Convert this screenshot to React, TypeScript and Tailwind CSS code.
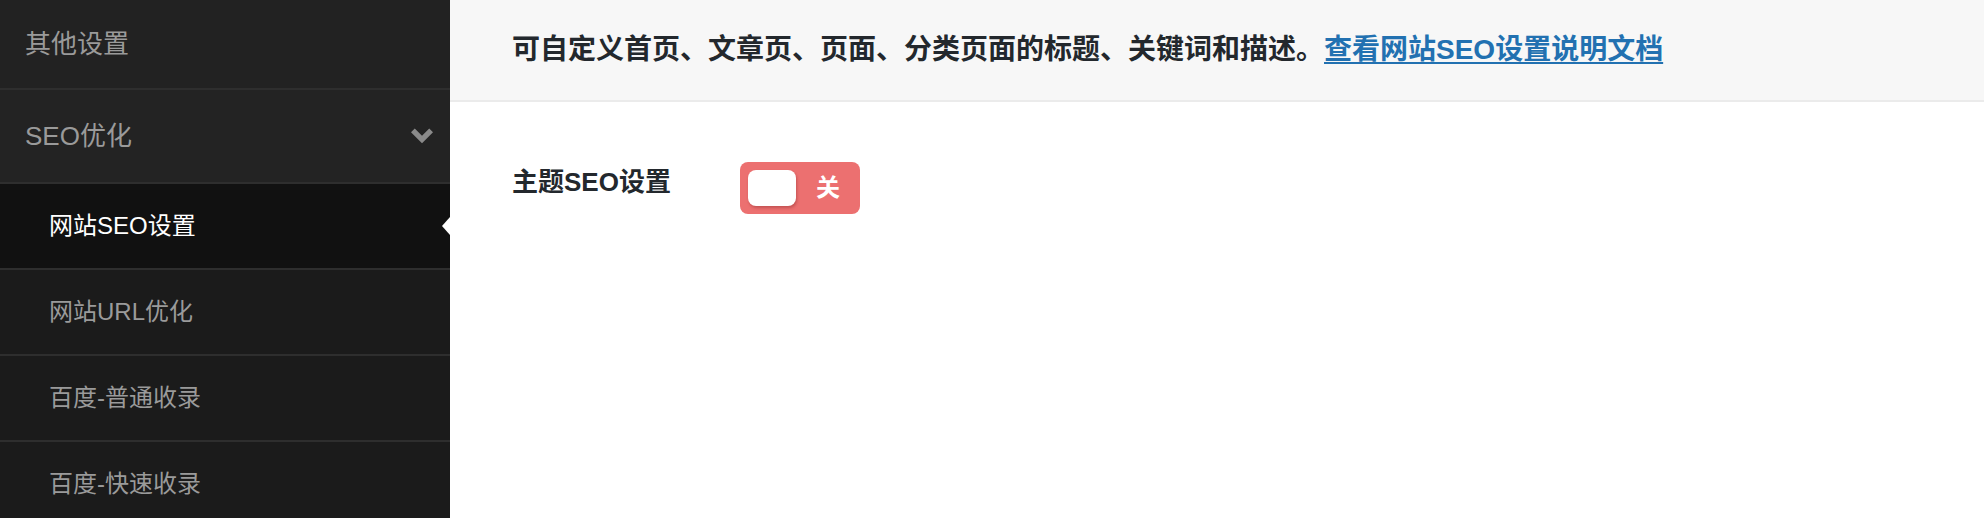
import React from 'react'

const font = { fontFamily: '"Liberation Sans", "Noto Sans CJK SC", sans-serif' }

type SubItem = { label: string; active?: boolean }

const subItems: SubItem[] = [
  { label: '网站SEO设置', active: true },
  { label: '网站URL优化' },
  { label: '百度-普通收录' },
  { label: '百度-快速收录' },
]

function ChevronDown() {
  return (
    <svg width="22" height="16" viewBox="0 0 21 15" className="block">
      <polygon points="0,4 3.6,0.4 10.5,7.3 17.4,0.4 21,4 10.5,14.5" fill="#8a8a8a" />
    </svg>
  )
}

function Divider() {
  return <div className="h-[2px] shrink-0 bg-[#2e2e2e]" />
}

function Sidebar() {
  return (
    <aside className="w-[450px] shrink-0 bg-[#1b1b1b] flex flex-col">
      <div className="h-[88px] shrink-0 bg-[#222222] flex items-center pl-[25px] text-[26px] text-[#9a9a9a]">
        其他设置
      </div>
      <Divider />
      <div className="h-[92px] shrink-0 bg-[#232323] flex items-center justify-between pl-[25px] pr-[17px] text-[26px] text-[#9a9a9a]">
        <span>SEO优化</span>
        <ChevronDown />
      </div>
      <Divider />
      {subItems.map(item => (
        <React.Fragment key={item.label}>
          <div
            className={`relative h-[84px] shrink-0 flex items-center pl-[49px] text-[24px] ${
              item.active ? 'bg-[#111111] text-white' : 'bg-[#1b1b1b] text-[#9a9a9a]'
            }`}
          >
            {item.label}
            {item.active && (
              <span className="absolute right-0 top-1/2 -translate-y-1/2 w-0 h-0 border-y-[9px] border-y-transparent border-r-[8px] border-r-white" />
            )}
          </div>
          <Divider />
        </React.Fragment>
      ))}
    </aside>
  )
}

function Toggle() {
  return (
    <div className="w-[120px] h-[52px] rounded-[8px] bg-[#ec7070] flex items-center pl-[8px]">
      <div className="w-[48px] h-[36px] rounded-[8px] bg-white shadow-[1px_2px_3px_rgba(120,30,30,0.35)]" />
      <span className="flex-1 text-center text-white font-bold text-[24px] leading-none">关</span>
    </div>
  )
}

export default function App() {
  return (
    <div className="flex w-full h-[518px] overflow-hidden" style={font}>
      <Sidebar />
      <main className="flex-1 bg-white flex flex-col">
        <header className="h-[102px] shrink-0 bg-[#f7f7f7] border-b-2 border-[#ebebeb] flex items-center pl-[62px] text-[28px] font-bold text-[#23282d]">
          <p>
            可自定义首页、文章页、页面、分类页面的标题、关键词和描述。
            <a href="#" className="text-[#2271b1] underline underline-offset-[3px]">
              查看网站SEO设置说明文档
            </a>
          </p>
        </header>
        <section className="flex items-start pl-[62px] pt-[60px]">
          <label className="w-[228px] pt-[2px] text-[26px] leading-[36px] font-bold text-[#23282d]">
            主题SEO设置
          </label>
          <Toggle />
        </section>
      </main>
    </div>
  )
}
